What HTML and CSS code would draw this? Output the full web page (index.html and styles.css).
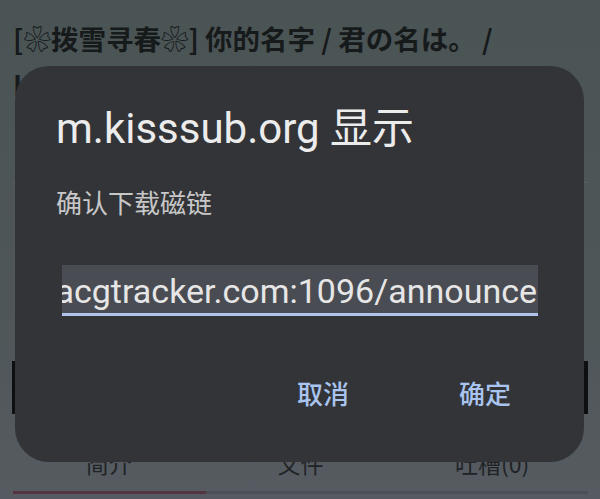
FILE: index.html
```html
<!DOCTYPE html>
<html lang="zh-CN">
<head>
<meta charset="utf-8">
<title>m.kisssub.org</title>
<link rel="stylesheet" href="styles.css">
</head>
<body>
<div class="page">
  <h1 class="post-title">[❀拨雪寻春❀] 你的名字 / 君の名は。 / Kimi_no_Na_wa. [1080P][简日双语][BDRip]</h1>
  <div class="rule"></div>
  <div class="spacer"></div>
  <div class="dl-btn"></div>
  <nav class="tabs">
    <span class="tab">简介</span>
    <span class="tab">文件</span>
    <span class="tab">吐槽(0)</span>
  </nav>
  <div class="indicator"><span class="indicator-active"></span></div>
</div>

<div class="dialog" role="dialog">
  <div class="dialog-title">m.kisssub.org 显示</div>
  <div class="dialog-msg">确认下载磁链</div>
  <div class="dialog-input">
    <span class="dialog-input-text">magnet:?xt=urn:btih:5c1a0f&amp;tr=http://t.acgtracker.com:1096/announce</span>
  </div>
  <div class="dialog-actions">
    <span class="dialog-btn">取消</span>
    <span class="dialog-btn">确定</span>
  </div>
</div>
</body>
</html>
```

FILE: styles.css
```css
html, body {
  margin: 0;
  padding: 0;
}

body {
  width: 600px;
  height: 499px;
  overflow: hidden;
  position: relative;
  background: linear-gradient(to bottom, #4b5455 0%, #4e5658 60%, #565b61 100%);
  font-family: Roboto, "Noto Sans CJK SC", sans-serif;
}

.page {
  display: flex;
  flex-direction: column;
  padding: 15px 12px 0 13px;
  height: 499px;
  box-sizing: border-box;
}

.post-title {
  margin: 0;
  padding-right: 40px;
  font-family: "Noto Sans CJK SC", sans-serif;
  font-weight: 700;
  font-size: 27.5px;
  line-height: 46px;
  color: #161a1b;
  height: 138px;
  overflow: hidden;
  white-space: normal;
}

.rule {
  margin-top: 29px;
  height: 1px;
  background: #596163;
}

.spacer {
  flex: 0 0 178px;
}

.dl-btn {
  height: 53px;
  margin-left: -1px;
  background: #0d0f10;
}

.tabs {
  display: grid;
  grid-template-columns: repeat(3, 1fr);
  margin-top: 32px;
  height: 45px;
  align-items: start;
}

.tab {
  text-align: center;
  font-family: "Noto Sans CJK SC", sans-serif;
  font-size: 23px;
  line-height: 34px;
  color: #1f2326;
}

.indicator {
  display: flex;
  height: 3px;
  background: #4a5057;
}

.indicator-active {
  width: 193px;
  background: #553441;
}

.dialog {
  position: absolute;
  left: 15px;
  top: 66px;
  width: 569px;
  height: 396px;
  box-sizing: border-box;
  border-radius: 34px;
  background: #323438;
  padding: 38px 46px 0 41px;
  display: flex;
  flex-direction: column;
}

.dialog-title {
  font-family: Roboto, "Noto Sans CJK SC", sans-serif;
  font-size: 42px;
  line-height: 50px;
  height: 50px;
  color: #ececec;
  white-space: nowrap;
}

.dialog-msg {
  margin-top: 32px;
  font-family: "Noto Sans CJK SC", sans-serif;
  font-size: 26px;
  line-height: 31px;
  height: 31px;
  color: #c8c8c8;
}

.dialog-input {
  margin: 48px 0 0 6px;
  height: 48px;
  display: flex;
  justify-content: flex-end;
  align-items: center;
  overflow: hidden;
  background: #4a4c53;
  border-bottom: 3px solid #aec4ec;
}

.dialog-input-text {
  flex: none;
  white-space: nowrap;
  font-family: Roboto, sans-serif;
  font-size: 34px;
  line-height: 48px;
  color: #e6e6e6;
  padding-right: 1px;
  position: relative;
  top: 2px;
}

.dialog-actions {
  display: flex;
  justify-content: flex-end;
  gap: 62px;
  margin-top: 59px;
  padding-right: 3px;
}

.dialog-btn {
  padding: 0 24px;
  font-family: "Noto Sans CJK SC", sans-serif;
  font-size: 26px;
  font-weight: 500;
  line-height: 36px;
  color: #a9c4ee;
}
```
